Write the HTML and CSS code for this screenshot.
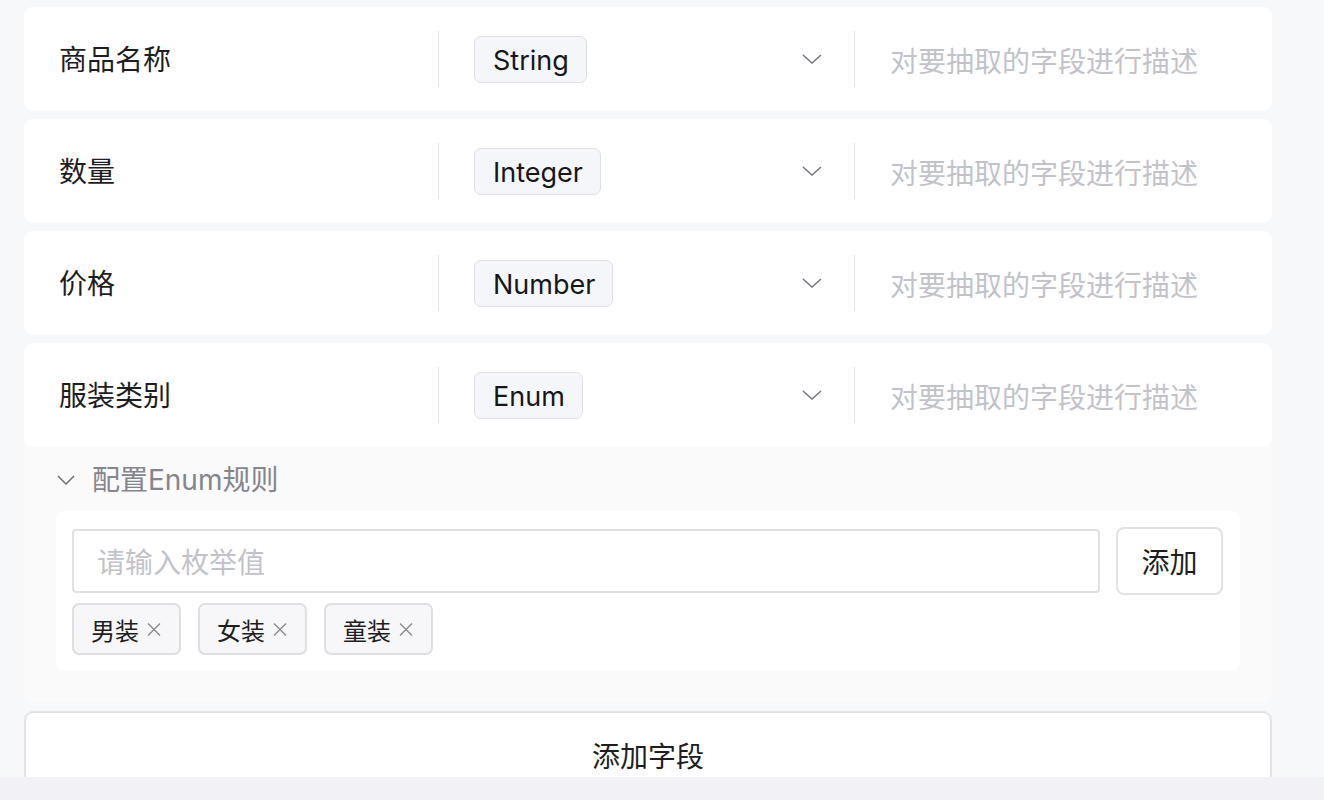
FILE: index.html
```html
<!DOCTYPE html>
<html lang="zh-CN">
<head>
<meta charset="utf-8">
<title>字段配置</title>
<link rel="stylesheet" href="styles.css">
</head>
<body>
<div class="page">
  <div class="list">
    <div class="card">
      <div class="row">
        <div class="name">商品名称</div>
        <div class="sep"></div>
        <div class="select"><span class="type-tag">String</span><svg class="chev" viewBox="0 0 20 10" width="20" height="10"><path d="M1 1 L10 9 L19 1" fill="none" stroke="#77777f" stroke-width="1.5"/></svg></div>
        <div class="sep"></div>
        <div class="desc">对要抽取的字段进行描述</div>
      </div>
    </div>
    <div class="card">
      <div class="row">
        <div class="name">数量</div>
        <div class="sep"></div>
        <div class="select"><span class="type-tag">Integer</span><svg class="chev" viewBox="0 0 20 10" width="20" height="10"><path d="M1 1 L10 9 L19 1" fill="none" stroke="#77777f" stroke-width="1.5"/></svg></div>
        <div class="sep"></div>
        <div class="desc">对要抽取的字段进行描述</div>
      </div>
    </div>
    <div class="card">
      <div class="row">
        <div class="name">价格</div>
        <div class="sep"></div>
        <div class="select"><span class="type-tag">Number</span><svg class="chev" viewBox="0 0 20 10" width="20" height="10"><path d="M1 1 L10 9 L19 1" fill="none" stroke="#77777f" stroke-width="1.5"/></svg></div>
        <div class="sep"></div>
        <div class="desc">对要抽取的字段进行描述</div>
      </div>
    </div>
    <div class="card card-enum">
      <div class="row">
        <div class="name">服装类别</div>
        <div class="sep"></div>
        <div class="select"><span class="type-tag">Enum</span><svg class="chev" viewBox="0 0 20 10" width="20" height="10"><path d="M1 1 L10 9 L19 1" fill="none" stroke="#77777f" stroke-width="1.5"/></svg></div>
        <div class="sep"></div>
        <div class="desc">对要抽取的字段进行描述</div>
      </div>
      <div class="enum-panel">
        <div class="enum-head">
          <svg class="enum-chev" viewBox="0 0 18 10" width="18" height="10"><path d="M1 1 L9 9 L17 1" fill="none" stroke="#6e6e76" stroke-width="1.5"/></svg>
          <span>配置Enum规则</span>
        </div>
        <div class="enum-box">
          <div class="enum-input-row">
            <div class="enum-input">请输入枚举值</div>
            <button class="enum-add">添加</button>
          </div>
          <div class="enum-tags">
            <span class="enum-tag">男装<svg class="x" viewBox="0 0 14 14" width="14" height="15"><path d="M1 1 L13 13 M13 1 L1 13" stroke="#8a8a92" stroke-width="1.4"/></svg></span>
            <span class="enum-tag">女装<svg class="x" viewBox="0 0 14 14" width="14" height="15"><path d="M1 1 L13 13 M13 1 L1 13" stroke="#8a8a92" stroke-width="1.4"/></svg></span>
            <span class="enum-tag">童装<svg class="x" viewBox="0 0 14 14" width="14" height="15"><path d="M1 1 L13 13 M13 1 L1 13" stroke="#8a8a92" stroke-width="1.4"/></svg></span>
          </div>
        </div>
      </div>
    </div>
    <button class="add-field">添加字段</button>
  </div>
  <div class="footer-strip"></div>
</div>
</body>
</html>
```

FILE: styles.css
```css
* { box-sizing: border-box; }
html, body { margin: 0; padding: 0; }
body {
  background: #f7f8fa;
  font-family: Inter, "Noto Sans CJK SC", sans-serif;
  color: #1d1d22;
  width: 1324px;
  height: 800px;
  overflow: hidden;
}
.page {
  display: flex;
  flex-direction: column;
  height: 800px;
}
.list {
  height: 777px;
  overflow: hidden;
  padding: 7px 52px 0 24px;
  display: flex;
  flex-direction: column;
  gap: 8px;
}
.card {
  background: #ffffff;
  border-radius: 9px;
  flex: none;
}
.card-enum {
  background: #fafafb;
  overflow: hidden;
}
.row {
  height: 104px;
  display: flex;
  align-items: center;
  padding-left: 35px;
  background: #ffffff;
  border-radius: 9px;
}
.name {
  width: 379px;
  font-size: 28px;
  line-height: 1;
  padding-top: 2px;
  color: #1d1d22;
}
.sep {
  width: 1px;
  height: 56px;
  background: #e4e5ea;
  flex: none;
}
.select {
  width: 415px;
  padding: 0 32px 0 35px;
  display: flex;
  align-items: center;
  justify-content: space-between;
}
.type-tag {
  height: 47px;
  display: inline-flex;
  align-items: center;
  padding: 3px 17px 0 18px;
  font-size: 27px;
  background: #f5f6f9;
  border: 1px solid #dfe0e6;
  border-radius: 7px;
  color: #16161b;
}
.chev { display: block; }
.desc {
  padding-left: 35px;
  padding-top: 2px;
  font-size: 28px;
  color: #c2c3c9;
}
.enum-panel {
  padding: 16px 32px 31px 32px;
}
.enum-head {
  display: flex;
  align-items: center;
  height: 34px;
  margin-bottom: 14px;
}
.enum-chev {
  margin-left: 1px;
  margin-right: 17px;
}
.enum-head span {
  font-size: 28px;
  line-height: 1;
  color: #84858d;
}
.enum-box {
  background: #ffffff;
  border-radius: 9px;
  padding: 16px 17px 16px 16px;
}
.enum-input-row {
  display: flex;
  align-items: center;
  gap: 16px;
}
.enum-input {
  flex: 1;
  height: 64px;
  border: 2px solid #e0e0e5;
  border-radius: 4px;
  padding-left: 23px;
  display: flex;
  align-items: center;
  font-size: 28px;
  color: #c2c3c9;
}
.enum-add {
  width: 107px;
  height: 68px;
  background: #ffffff;
  border: 2px solid #e2e2e7;
  border-radius: 8px;
  font-family: inherit;
  font-size: 28px;
  color: #1d1d22;
  padding: 0;
}
.enum-tags {
  display: flex;
  gap: 17px;
  margin-top: 8px;
}
.enum-tag {
  width: 109px;
  height: 52px;
  display: inline-flex;
  align-items: center;
  padding-left: 17px;
  gap: 8px;
  font-size: 24px;
  background: #f7f7f9;
  border: 2px solid #dedee3;
  border-radius: 7px;
  color: #1d1d22;
}
.x { display: block; }
.add-field {
  flex: none;
  height: 90px;
  margin-top: 1px;
  width: 1248px;
  background: #ffffff;
  border: 2px solid #e3e3e8;
  border-radius: 9px;
  font-family: inherit;
  font-size: 28px;
  color: #1d1d22;
  padding: 0 0 2px 0;
}
.footer-strip {
  height: 23px;
  background: #f2f2f6;
}
```
